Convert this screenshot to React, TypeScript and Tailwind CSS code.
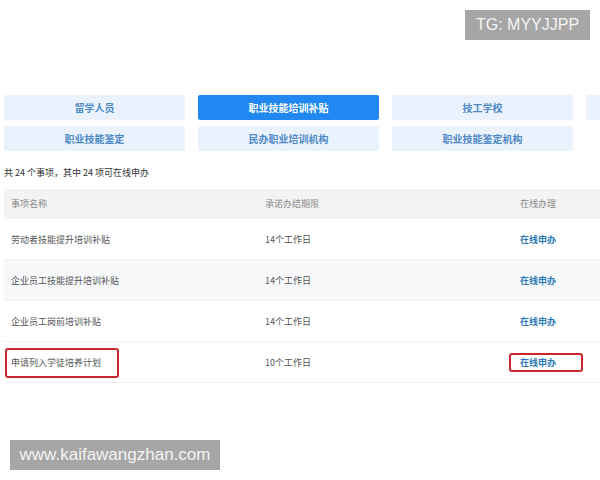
const cats = [
  [
    { label: "留学人员" },
    { label: "职业技能培训补贴", active: true },
    { label: "技工学校" },
    { label: "" },
  ],
  [{ label: "职业技能鉴定" }, { label: "民办职业培训机构" }, { label: "职业技能鉴定机构" }],
];

const rows = [
  { name: "劳动者技能提升培训补贴", days: "14个工作日" },
  { name: "企业员工技能提升培训补贴", days: "14个工作日", shaded: true },
  { name: "企业员工岗前培训补贴", days: "14个工作日" },
  { name: "申请列入学徒培养计划", days: "10个工作日", marked: true },
];

const cjk = "font-['Noto_Sans_CJK_SC',sans-serif]";

export default function App() {
  return (
    <div className={`relative h-[480px] w-[600px] overflow-hidden bg-white ${cjk}`}>
      <div className="flex flex-col gap-[6px] pl-[4px] pt-[95px]">
        {cats.map((row, i) => (
          <div key={i} className="flex gap-[13px]">
            {row.map((c, j) => (
              <div
                key={j}
                className={`flex h-[25px] w-[181px] shrink-0 items-center justify-center rounded-[2px] text-[10px] font-bold ${
                  c.active ? "bg-[#2188f2] text-white" : "bg-[#eaf3fd] text-[#4f89c6]"
                }`}
              >
                {c.label}
              </div>
            ))}
          </div>
        ))}
      </div>

      <p className="mt-[15px] pl-[4px] text-[9px] leading-[14px] text-[#333]">
        共 24 个事项，其中 24 项可在线申办
      </p>

      <div className="ml-[4px] mt-[9px] text-[9px]">
        <div className="grid h-[30px] grid-cols-[254px_255px_1fr] items-center bg-[#f3f3f3] text-[#8a8a8a]">
          <span className="pl-[7px]">事项名称</span>
          <span className="pl-[7px]">承诺办结期限</span>
          <span className="pl-[7px]">在线办理</span>
        </div>
        {rows.map((r) => (
          <div
            key={r.name}
            className={`grid h-[41px] grid-cols-[254px_255px_1fr] items-center border-b border-[#f0f0f0] pt-[2px] text-[#555] ${
              r.shaded ? "bg-[#f6f8fa]" : "bg-white"
            }`}
          >
            <span className="relative pl-[7px]">
              {r.name}
              {r.marked && (
                <span className="pointer-events-none absolute left-[1px] top-[-8px] h-[30px] w-[114px] rounded-[3px] border-2 border-[#c8272d]" />
              )}
            </span>
            <span className="pl-[7px]">{r.days}</span>
            <span className="relative pl-[7px] font-bold text-[#2c79b6]">
              在线申办
              {r.marked && (
                <span className="pointer-events-none absolute left-[-4px] top-[-3px] h-[19px] w-[74px] rounded-[3px] border-2 border-[#c8272d]" />
              )}
            </span>
          </div>
        ))}
      </div>

      <div className="absolute left-[465px] top-[10px] flex h-[30px] w-[125px] items-center justify-center bg-[#a6a6a6] font-['Liberation_Sans',sans-serif] text-[16px] text-[#f4f4f4]">
        TG: MYYJJPP
      </div>
      <div className="absolute left-[10px] top-[440px] flex h-[30px] w-[210px] items-center justify-center bg-[#a6a6a6] font-['Liberation_Sans',sans-serif] text-[17px] text-[#f4f4f4]">
        www.kaifawangzhan.com
      </div>
    </div>
  );
}
